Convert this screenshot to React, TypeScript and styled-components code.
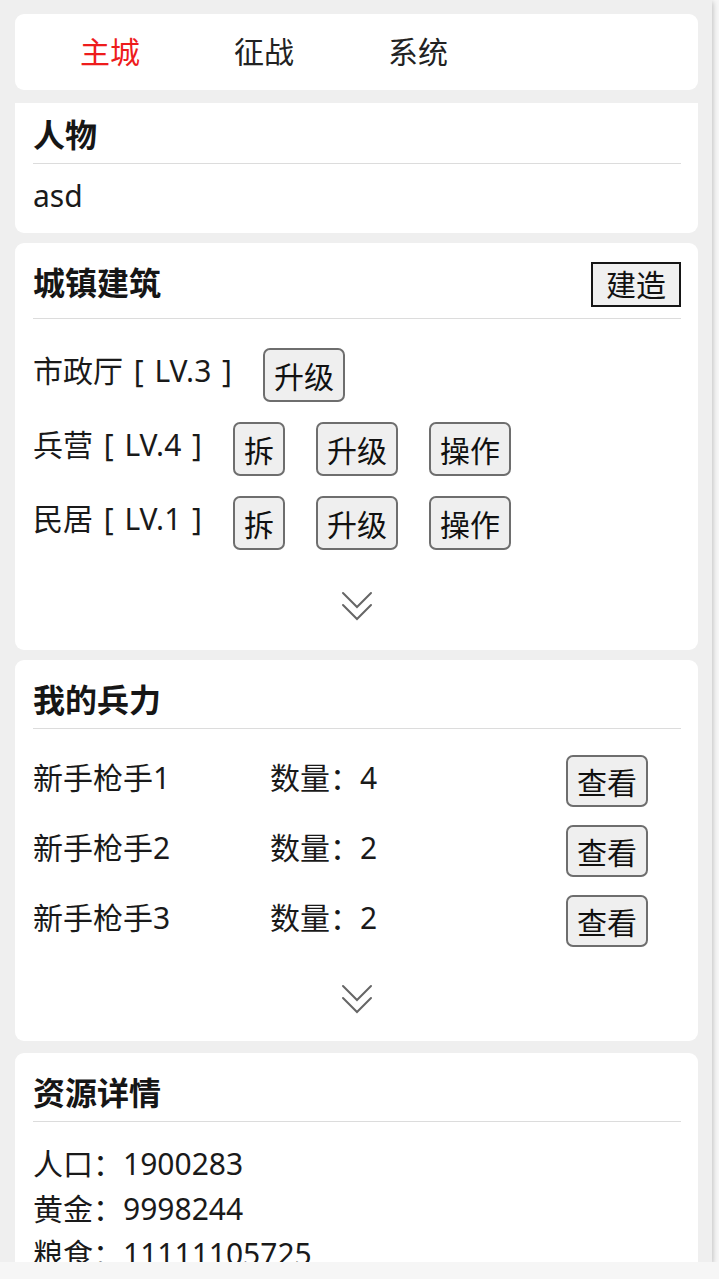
import { FC, ReactNode } from 'react'
import styled, { createGlobalStyle } from 'styled-components'

const GlobalStyle = createGlobalStyle`
  html, body {
    margin: 0;
    padding: 0;
    background: #f6f6f6;
  }
  body {
    font-family: 'Noto Sans', 'Noto Sans CJK SC', sans-serif;
    color: #1a1a1a;
  }
  * {
    box-sizing: border-box;
  }
`

const Screen = styled.div`
  width: 712px;
  height: 1262px;
  overflow: hidden;
  background: #efefef;
  box-shadow: 1px 2px 5px rgba(0, 0, 0, 0.22);
  padding: 14px 14px 0 15px;
  display: flex;
  flex-direction: column;
  gap: 10px;
`

const TabBar = styled.nav`
  flex-shrink: 0;
  height: 76px;
  background: #fff;
  border-radius: 9px;
  padding: 0 18px;
  margin-bottom: 3px;
  display: flex;
  align-items: center;
`

const Tab = styled.div<{ $active?: boolean }>`
  width: 154px;
  text-align: center;
  font-size: 30px;
  line-height: 40px;
  color: ${(p) => (p.$active ? '#ee1c1c' : '#222')};
`

const Card = styled.section<{ $flatTop?: boolean; $after?: number }>`
  flex-shrink: 0;
  background: #fff;
  border-radius: ${(p) => (p.$flatTop ? '0 0 9px 9px' : '9px')};
  padding: ${(p) => (p.$flatTop ? '8px' : '16px')} 17px 0 18px;
  margin-bottom: ${(p) => p.$after ?? 0}px;
`

const CardHeader = styled.div<{ $pad?: number }>`
  display: flex;
  align-items: center;
  justify-content: space-between;
  min-height: 48px;
  padding-bottom: ${(p) => p.$pad ?? 4}px;
  border-bottom: 1px solid #dcdcdc;
`

const CardTitle = styled.h2`
  margin: 0;
  font-size: 32px;
  line-height: 48px;
  font-weight: 700;
  color: #161616;
`

const BuildButton = styled.button`
  font-family: inherit;
  font-size: 30px;
  line-height: 39px;
  height: 45px;
  padding: 0 13px;
  margin: 2px 0 0;
  background: #f0f0f0;
  color: #111;
  border: 2px solid #161616;
  border-radius: 0;
`

const PlainText = styled.div<{ $top?: number; $bottom?: number }>`
  font-size: 30px;
  line-height: 45px;
  margin-top: ${(p) => p.$top ?? 0}px;
  padding-bottom: ${(p) => p.$bottom ?? 0}px;
`

const List = styled.div<{ $top: number; $gap: number }>`
  display: flex;
  flex-direction: column;
  gap: ${(p) => p.$gap}px;
  margin-top: ${(p) => p.$top}px;
`

const BuildingRow = styled.div`
  display: flex;
  align-items: flex-start;
  gap: 31px;
`

const RowLabel = styled.span`
  font-size: 30px;
  line-height: 45px;
  white-space: pre;
  word-spacing: 3px;
`

const ActionButton = styled.button<{ $h?: number }>`
  font-family: inherit;
  font-size: 30px;
  line-height: 36px;
  height: ${(p) => p.$h ?? 54}px;
  padding: 4px 9px 0;
  background: #efefef;
  color: #111;
  border: 2px solid #6e6e6e;
  border-radius: 7px;
`

const TroopRow = styled.div`
  display: grid;
  grid-template-columns: 237px 1fr auto;
  align-items: start;
  padding-right: 33px;
`

const MoreToggle = styled.div<{ $top: number; $bottom: number }>`
  display: flex;
  justify-content: center;
  margin-top: ${(p) => p.$top}px;
  padding-bottom: ${(p) => p.$bottom}px;
  color: #666;
`

const DoubleChevron: FC = () => (
  <svg width="34" height="34" viewBox="0 0 34 34" fill="none">
    <path d="M3 4 L17 18 L31 4" stroke="currentColor" strokeWidth="2" strokeLinecap="round" />
    <path d="M3 16 L17 30 L31 16" stroke="currentColor" strokeWidth="2" strokeLinecap="round" />
  </svg>
)

interface SectionProps {
  title: string
  action?: ReactNode
  pad?: number
  flatTop?: boolean
  after?: number
  children: ReactNode
}

const Section: FC<SectionProps> = ({ title, action, pad, flatTop, after, children }) => (
  <Card $flatTop={flatTop} $after={after}>
    <CardHeader $pad={pad}>
      <CardTitle>{title}</CardTitle>
      {action}
    </CardHeader>
    {children}
  </Card>
)

const buildings = [
  { name: '市政厅 [ LV.3 ]', actions: ['升级'] },
  { name: '兵营 [ LV.4 ]', actions: ['拆', '升级', '操作'] },
  { name: '民居 [ LV.1 ]', actions: ['拆', '升级', '操作'] },
]

const troops = [
  { name: '新手枪手1', count: 4 },
  { name: '新手枪手2', count: 2 },
  { name: '新手枪手3', count: 2 },
]

const resources = [
  { label: '人口', value: '1900283' },
  { label: '黄金', value: '9998244' },
  { label: '粮食', value: '11111105725' },
  { label: '木材', value: '8800123' },
]

const App: FC = () => (
  <>
    <GlobalStyle />
    <Screen>
      <TabBar>
        <Tab $active>主城</Tab>
        <Tab>征战</Tab>
        <Tab>系统</Tab>
      </TabBar>

      <Section title="人物" flatTop>
        <PlainText $top={9} $bottom={15}>asd</PlainText>
      </Section>

      <Section title="城镇建筑" pad={11} action={<BuildButton>建造</BuildButton>}>
        <List $top={29} $gap={20}>
          {buildings.map((b) => (
            <BuildingRow key={b.name}>
              <RowLabel>{b.name}</RowLabel>
              {b.actions.map((a) => (
                <ActionButton key={a}>{a}</ActionButton>
              ))}
            </BuildingRow>
          ))}
        </List>
        <MoreToggle $top={39} $bottom={27}>
          <DoubleChevron />
        </MoreToggle>
      </Section>

      <Section title="我的兵力" after={2}>
        <List $top={26} $gap={18}>
          {troops.map((t) => (
            <TroopRow key={t.name}>
              <RowLabel>{t.name}</RowLabel>
              <RowLabel>数量：{t.count}</RowLabel>
              <ActionButton $h={52}>查看</ActionButton>
            </TroopRow>
          ))}
        </List>
        <MoreToggle $top={35} $bottom={25}>
          <DoubleChevron />
        </MoreToggle>
      </Section>

      <Section title="资源详情">
        <List $top={19} $gap={0}>
          {resources.map((r) => (
            <PlainText key={r.label}>
              {r.label}：{r.value}
            </PlainText>
          ))}
        </List>
      </Section>
    </Screen>
  </>
)

export default App
